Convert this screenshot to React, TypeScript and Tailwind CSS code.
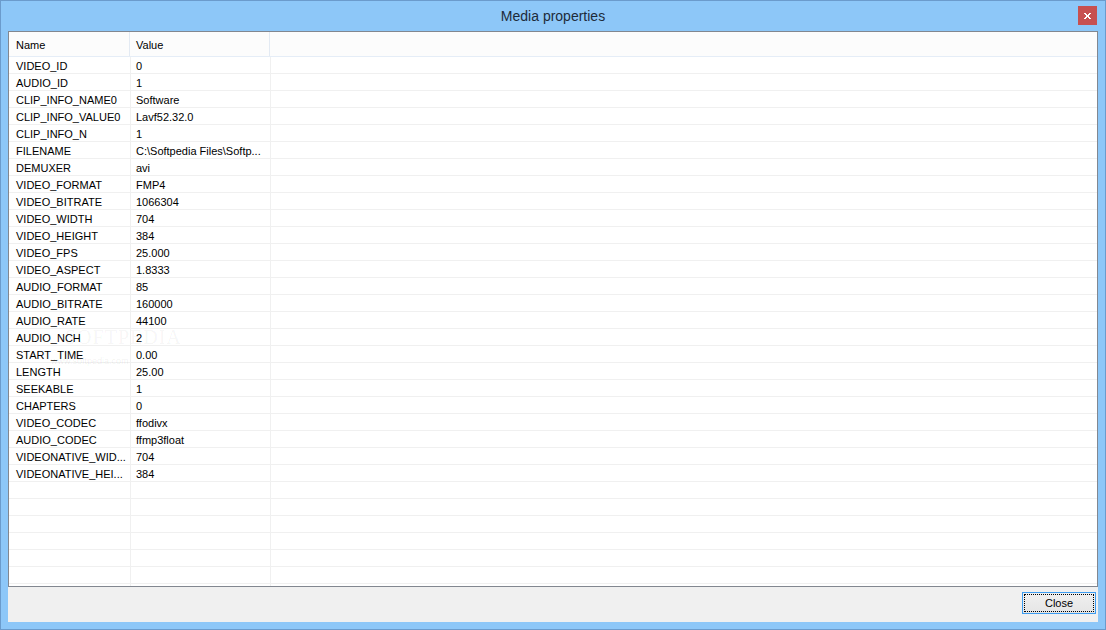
import React from 'react';

const rows: [string, string][] = [
  ['VIDEO_ID', '0'],
  ['AUDIO_ID', '1'],
  ['CLIP_INFO_NAME0', 'Software'],
  ['CLIP_INFO_VALUE0', 'Lavf52.32.0'],
  ['CLIP_INFO_N', '1'],
  ['FILENAME', 'C:\\Softpedia Files\\Softp...'],
  ['DEMUXER', 'avi'],
  ['VIDEO_FORMAT', 'FMP4'],
  ['VIDEO_BITRATE', '1066304'],
  ['VIDEO_WIDTH', '704'],
  ['VIDEO_HEIGHT', '384'],
  ['VIDEO_FPS', '25.000'],
  ['VIDEO_ASPECT', '1.8333'],
  ['AUDIO_FORMAT', '85'],
  ['AUDIO_BITRATE', '160000'],
  ['AUDIO_RATE', '44100'],
  ['AUDIO_NCH', '2'],
  ['START_TIME', '0.00'],
  ['LENGTH', '25.00'],
  ['SEEKABLE', '1'],
  ['CHAPTERS', '0'],
  ['VIDEO_CODEC', 'ffodivx'],
  ['AUDIO_CODEC', 'ffmp3float'],
  ['VIDEONATIVE_WID...', '704'],
  ['VIDEONATIVE_HEI...', '384'],
];

const emptyRows = 7;

const Row: React.FC<{ name: string; value: string }> = ({ name, value }) => (
  <div className="flex h-[17px] shrink-0 border-b border-[#f0f0f0] text-[11px] leading-[18px] text-black">
    <div className="w-[122px] shrink-0 pl-[7px] border-r border-[#f0f0f0] whitespace-nowrap overflow-hidden">{name}</div>
    <div className="w-[140px] shrink-0 pl-[5px] border-r border-[#f0f0f0] whitespace-nowrap overflow-hidden">{value}</div>
    <div className="flex-1" />
  </div>
);

const App: React.FC = () => {
  return (
    <div
      className="w-[1106px] h-[630px] flex flex-col bg-[#8dc7f8] border border-[#6b9bcc] overflow-hidden"
      style={{ fontFamily: '"Liberation Sans", Arial, sans-serif' }}
    >
      {/* title bar */}
      <div className="relative h-[30px] shrink-0 flex items-center justify-center">
        <span className="text-[14px] text-[#1d2b3a] mt-[1px]">Media properties</span>
        <button className="absolute right-[8px] top-[5px] w-[19px] h-[19px] bg-[#c75050] flex items-center justify-center">
          <svg width="7" height="6" viewBox="0 0 7 6" shapeRendering="crispEdges">
            <path d="M0 0h2v1h1v1h1v-1h1v-1h2v1h-1v1h-1v2h1v1h1v1h-2v-1h-1v-1h-1v1h-1v1h-2v-1h1v-1h1v-2h-1v-1h-1z" fill="#fff" />
          </svg>
        </button>
      </div>

      {/* client area */}
      <div className="flex-1 mx-[7px] mb-[7px] bg-[#f0f0f0] flex flex-col">
        {/* list view */}
        <div className="relative h-[556px] shrink-0 bg-white border border-[#828790] flex flex-col overflow-hidden">
          <div className="flex h-[25px] shrink-0 bg-[#fcfcfc] border-b border-[#e5edf7] text-[11px] text-black">
            <div className="w-[121px] shrink-0 pl-[7px] pt-[2px] flex items-center border-r border-[#e3eaf3]">Name</div>
            <div className="w-[140px] shrink-0 pl-[6px] pt-[2px] flex items-center border-r border-[#e3eaf3]">Value</div>
            <div className="flex-1" />
          </div>
          {rows.map(([n, v]) => (
            <Row key={n} name={n} value={v} />
          ))}
          {Array.from({ length: emptyRows }).map((_, i) => (
            <Row key={'e' + i} name="" value="" />
          ))}
          {/* watermark */}
          <div
            className="absolute left-[56px] top-[290px] text-[20px] tracking-[1px] text-black/[0.05] pointer-events-none select-none"
            style={{ fontFamily: '"Liberation Serif", serif' }}
          >
            SOFTPEDIA
          </div>
          <div className="absolute left-[42px] top-[323px] text-[9px] text-black/[0.08] pointer-events-none select-none">
            www.softpedia.com
          </div>
        </div>

        {/* button strip */}
        <div className="flex-1 flex items-start justify-end pt-[5px] pr-[2px]">
          <button className="w-[74px] h-[22px] border border-[#3c9cf0] bg-gradient-to-b from-[#f0f0f0] to-[#e5e5e5] p-[1px]">
            <div className="w-full h-full border border-dotted border-black flex items-center justify-center text-[11px] text-black pt-[1px]">
              Close
            </div>
          </button>
        </div>
      </div>
    </div>
  );
};

export default App;
